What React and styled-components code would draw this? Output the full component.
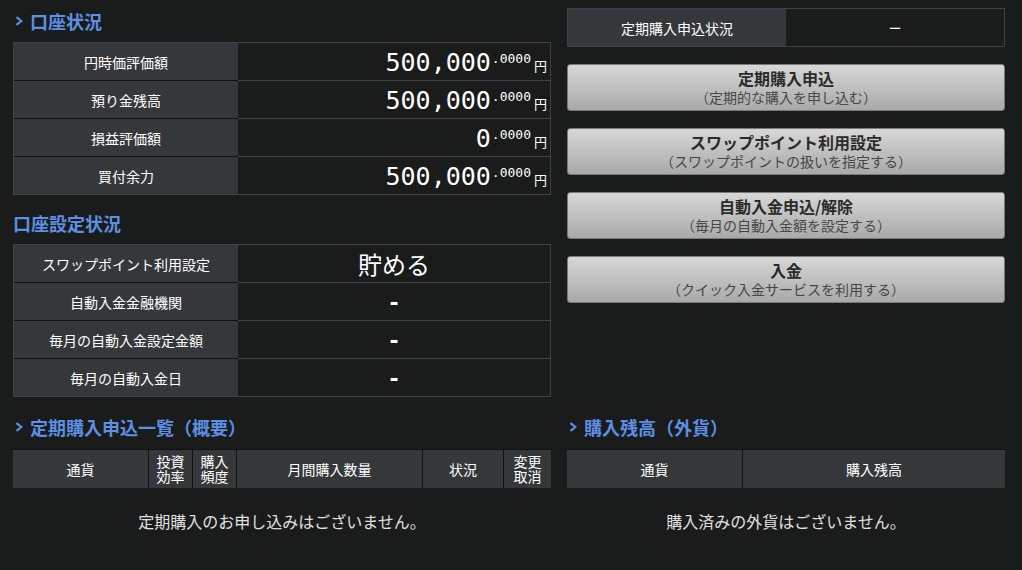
import React from "react";
import styled, { createGlobalStyle } from "styled-components";

const GlobalStyle = createGlobalStyle`
  html, body { margin: 0; padding: 0; background: #1a1b1b; }
  body {
    font-family: "Noto Sans CJK JP", "Noto Sans", sans-serif;
    color: #fff;
  }
  * { box-sizing: border-box; }
`;

const Page = styled.div`
  width: 1022px;
  height: 570px;
  padding: 6px 17px 0 13px;
  display: grid;
  grid-template-columns: 538px 438px;
  column-gap: 16px;
  align-items: start;
  align-content: start;
`;

const Column = styled.div`
  display: flex;
  flex-direction: column;
  margin-top: ${(p) => p.$top || 0}px;
`;

const Heading = styled.h2`
  margin: ${(p) => p.$mt || 0}px 0 ${(p) => p.$mb || 4}px 0;
  padding-left: ${(p) => (p.$chevron ? 2 : 0)}px;
  padding-bottom: 2px;
  height: 32px;
  display: flex;
  align-items: center;
  font-size: 18px;
  font-weight: 700;
  line-height: 30px;
  color: #5d8fe4;
`;

const ChevronSvg = styled.svg`
  width: 8px;
  height: 10px;
  margin-right: 7px;
  flex: none;
`;

const Chevron = () => (
  <ChevronSvg viewBox="0 0 8 10">
    <polyline points="1.5,1.2 6.3,5 1.5,8.8" fill="none" stroke="#5d8fe4" strokeWidth="2.2" />
  </ChevronSvg>
);

const InfoTable = styled.div`
  border: 1px solid #3d414b;
  display: flex;
  flex-direction: column;
`;

const InfoRow = styled.div`
  display: grid;
  grid-template-columns: ${(p) => p.$label || 224}px 1fr;
  height: ${(p) => (p.$last ? 37 : 38)}px;
`;

const Label = styled.div`
  background: #35383a;
  display: flex;
  align-items: center;
  justify-content: center;
  font-size: 14px;
  color: #fff;
  border-bottom: ${(p) => (p.$last ? "none" : "1px solid #101111")};
`;

const Value = styled.div`
  display: flex;
  align-items: center;
  justify-content: ${(p) => (p.$center ? "center" : "flex-end")};
  padding-right: ${(p) => (p.$center ? 0 : 3)}px;
  border-bottom: ${(p) => (p.$last ? "none" : "1px solid #3d414b")};
  font-size: ${(p) => p.$size || 14}px;
  line-height: 1;
  color: #fff;
`;

const Dash = styled.span`
  font-family: "DejaVu Sans", sans-serif;
  font-weight: 700;
  font-size: 22px;
  line-height: 1;
  padding-top: 3px;
`;

const Amount = styled.div`
  display: flex;
  align-items: baseline;
  padding-top: 2px;
`;

const Int = styled.span`
  font-family: "DejaVu Sans Mono", "Liberation Mono", monospace;
  font-size: 25px;
  line-height: 1;
`;

const Frac = styled.span`
  font-family: "DejaVu Sans Mono", "Liberation Mono", monospace;
  font-size: 13px;
  line-height: 1;
  align-self: flex-start;
  margin-top: 2px;
  margin-left: 1px;
`;

const Yen = styled.span`
  font-size: 13px;
  line-height: 1;
  margin-left: 3px;
`;

const StatusDash = styled.span`
  font-size: 13px;
  color: #fff;
`;

const ButtonList = styled.div`
  margin-top: 17px;
  display: flex;
  flex-direction: column;
  gap: 17px;
`;

const ActionButton = styled.button`
  width: 100%;
  height: 47px;
  padding: 0;
  display: flex;
  flex-direction: column;
  align-items: center;
  justify-content: center;
  border: 1px solid #7a7a7a;
  border-radius: 3px;
  background: linear-gradient(#d7d7d7, #a9a9a9);
  font-family: inherit;
  cursor: pointer;
`;

const BtnTitle = styled.span`
  font-size: 16px;
  font-weight: 700;
  line-height: 19px;
  color: #2b2b2b;
`;

const BtnSub = styled.span`
  font-size: 14px;
  line-height: 18px;
  color: #474747;
`;

const ListTable = styled.div`
  display: grid;
  grid-template-columns: ${(p) => p.$cols};
  column-gap: 1px;
  background: #101111;
  border-top: 1px solid #0e0f0f;
  height: 39px;
`;

const HeadCell = styled.div`
  background: #35383a;
  display: flex;
  align-items: center;
  justify-content: center;
  text-align: center;
  font-size: 14px;
  line-height: 15px;
  color: #fff;
`;

const CellText = styled.span`
  display: block;
`;

const Empty = styled.div`
  margin-top: 22px;
  text-align: center;
  font-size: 16px;
  line-height: 22px;
  color: #e0e0e0;
`;

const amounts = [
  ["円時価評価額", "500,000"],
  ["預り金残高", "500,000"],
  ["損益評価額", "0"],
  ["買付余力", "500,000"],
];

const settings = [
  ["スワップポイント利用設定", "貯める"],
  ["自動入金金融機関", "-"],
  ["毎月の自動入金設定金額", "-"],
  ["毎月の自動入金日", "-"],
];

const buttons = [
  ["定期購入申込", "（定期的な購入を申し込む）"],
  ["スワップポイント利用設定", "（スワップポイントの扱いを指定する）"],
  ["自動入金申込/解除", "（毎月の自動入金額を設定する）"],
  ["入金", "（クイック入金サービスを利用する）"],
];

const TwoLine = ({ a, b }) => (
  <CellText>
    {a}
    <br />
    {b}
  </CellText>
);

export default function App() {
  return (
    <>
      <GlobalStyle />
      <Page>
        <Column>
          <Heading $chevron>
            <Chevron />
            口座状況
          </Heading>
          <InfoTable>
            {amounts.map(([label, v], i) => {
              const last = i === amounts.length - 1;
              return (
                <InfoRow key={label} $last={last}>
                  <Label $last={last}>{label}</Label>
                  <Value $last={last}>
                    <Amount>
                      <Int>{v}</Int>
                      <Frac>.0000</Frac>
                      <Yen>円</Yen>
                    </Amount>
                  </Value>
                </InfoRow>
              );
            })}
          </InfoTable>
          <Heading $mt={13}>口座設定状況</Heading>
          <InfoTable>
            {settings.map(([label, v], i) => {
              const last = i === settings.length - 1;
              return (
                <InfoRow key={label} $last={last}>
                  <Label $last={last}>{label}</Label>
                  <Value $last={last} $center $size={24}>
                    {v === "-" ? <Dash>-</Dash> : v}
                  </Value>
                </InfoRow>
              );
            })}
          </InfoTable>
        </Column>

        <Column $top={2}>
          <InfoTable>
            <InfoRow $label={218} $last>
              <Label $last>定期購入申込状況</Label>
              <Value $last $center>
                <StatusDash>ー</StatusDash>
              </Value>
            </InfoRow>
          </InfoTable>
          <ButtonList>
            {buttons.map(([t, s]) => (
              <ActionButton key={t}>
                <BtnTitle>{t}</BtnTitle>
                <BtnSub>{s}</BtnSub>
              </ActionButton>
            ))}
          </ButtonList>
        </Column>

        <Column>
          <Heading $chevron $mt={15} $mb={5}>
            <Chevron />
            定期購入申込一覧（概要）
          </Heading>
          <ListTable $cols="135px 43px 43px 185px 80px 47px">
            <HeadCell>通貨</HeadCell>
            <HeadCell>
              <TwoLine a="投資" b="効率" />
            </HeadCell>
            <HeadCell>
              <TwoLine a="購入" b="頻度" />
            </HeadCell>
            <HeadCell>月間購入数量</HeadCell>
            <HeadCell>状況</HeadCell>
            <HeadCell>
              <TwoLine a="変更" b="取消" />
            </HeadCell>
          </ListTable>
          <Empty>定期購入のお申し込みはございません。</Empty>
        </Column>

        <Column>
          <Heading $chevron $mt={15} $mb={5}>
            <Chevron />
            購入残高（外貨）
          </Heading>
          <ListTable $cols="175px 262px">
            <HeadCell>通貨</HeadCell>
            <HeadCell>購入残高</HeadCell>
          </ListTable>
          <Empty>購入済みの外貨はございません。</Empty>
        </Column>
      </Page>
    </>
  );
}
